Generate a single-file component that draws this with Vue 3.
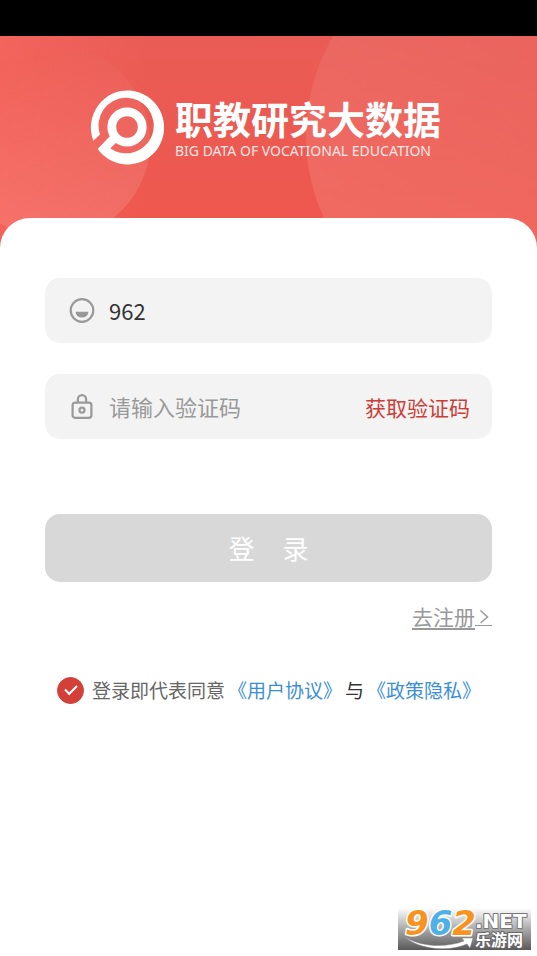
<script setup>
import { ref } from 'vue'

const account = ref('962')
const code = ref('')
const agreed = ref(true)
</script>

<template>
  <div class="page">
    <div class="status-bar"></div>

    <header class="hero">
      <svg class="hero-art" viewBox="0 0 537 213" preserveAspectRatio="xMidYMin slice" aria-hidden="true">
        <defs>
          <linearGradient id="base" x1="0" y1="0" x2="0" y2="1">
            <stop offset="0" stop-color="#e95c55" />
            <stop offset="1" stop-color="#ef574d" />
          </linearGradient>
          <linearGradient id="bubbleLeft" x1="0.3" y1="0.1" x2="0.6" y2="1">
            <stop offset="0" stop-color="#fff" stop-opacity="0" />
            <stop offset="1" stop-color="#fff" stop-opacity="0.13" />
          </linearGradient>
          <linearGradient id="bubbleRight" x1="0.6" y1="0" x2="0.2" y2="1">
            <stop offset="0" stop-color="#fff" stop-opacity="0.03" />
            <stop offset="1" stop-color="#fff" stop-opacity="0.13" />
          </linearGradient>
          <linearGradient id="glow" x1="0" y1="0" x2="1" y2="0">
            <stop offset="0" stop-color="#ff7068" stop-opacity="0.4" />
            <stop offset="1" stop-color="#ff7068" stop-opacity="0" />
          </linearGradient>
        </defs>
        <rect width="537" height="213" fill="url(#base)" />
        <rect width="150" height="213" fill="url(#glow)" />
        <circle cx="53" cy="106" r="97" fill="url(#bubbleLeft)" />
        <circle cx="502" cy="100" r="196" fill="url(#bubbleRight)" />
      </svg>
      <div class="brand">
        <svg class="brand-mark" viewBox="0 0 74 76" aria-hidden="true">
          <path d="M3.300 51.700A36.600 37 0 1 1 7.700 60L19.500 47.500L28 52L20.300 59.300A27.600 27.800 0 1 0 10 45.500Z" fill="#fff" />
          <circle cx="37" cy="38" r="15.200" fill="none" stroke="#fff" stroke-width="8.800" />
        </svg>
        <div class="brand-text">
          <h1>职教研究大数据</h1>
          <p>BIG DATA OF VOCATIONAL EDUCATION</p>
        </div>
      </div>
    </header>

    <main class="card">
      <form @submit.prevent>
        <div class="field">
          <label for="account" aria-label="账号">
            <svg viewBox="0 0 26 26" width="26" height="26" aria-hidden="true">
              <circle cx="13" cy="12.500" r="11.300" fill="none" stroke="#999" stroke-width="2.200" />
              <path d="M6.500 13.800H19.500A6.500 5.800 0 0 1 6.500 13.800Z" fill="#999" />
            </svg>
          </label>
          <input id="account" v-model="account" type="text" />
        </div>
        <div class="field">
          <label for="code" aria-label="验证码">
            <svg viewBox="0 0 26 26" width="26" height="26" aria-hidden="true">
              <g fill="none" stroke="#999" stroke-width="2.200">
                <rect x="3.600" y="8.600" width="18.800" height="15.200" rx="2.500" />
                <path d="M8.900 8.600V5.200A4.100 4.100 0 0 1 17.100 5.200V8.600" />
                <circle cx="13" cy="16.200" r="2.500" />
              </g>
            </svg>
          </label>
          <input id="code" v-model="code" type="text" placeholder="请输入验证码" />
          <button class="get-code" type="button">获取验证码</button>
        </div>

        <button class="submit" type="submit"><span>登</span><span>录</span></button>

        <a class="register" href="#register">
          <span>去注册</span>
          <svg viewBox="0 0 17 20" width="17" height="20" aria-hidden="true">
            <path d="M5.500 4.500L12.500 11L5.500 17" fill="none" stroke="#999" stroke-width="1.500" />
            <path d="M0 19.500H17" stroke="#999" stroke-width="1" />
          </svg>
        </a>

        <div class="agreement">
          <input id="agree" v-model="agreed" type="checkbox" />
          <label for="agree">登录即代表同意</label>
          <a href="#terms">《用户协议》</a>
          <span>与</span>
          <a href="#privacy">《政策隐私》</a>
        </div>
      </form>
    </main>

    <svg class="watermark" viewBox="0 0 133 42" role="img" aria-label="962.NET 乐游网">
      <defs>
        <linearGradient id="plate" x1="0" y1="0" x2="0" y2="1">
          <stop offset="0" stop-color="#fff" />
          <stop offset="0.500" stop-color="#aaa" />
          <stop offset="1" stop-color="#595959" />
        </linearGradient>
      </defs>
      <rect width="133" height="42" fill="url(#plate)" />
      <path d="M7 29C23 39 48 40 66 33L64 30L75 30L72 40L69 36C51 44 22 42 7 29Z" fill="#fff" stroke="#888" stroke-width="0.500" />
      <text class="wm-number" x="7" y="27"><tspan fill="#f7931e">9</tspan><tspan fill="#4fb0e8">6</tspan><tspan fill="#f7931e">2</tspan></text>
      <text class="wm-net" x="77" y="20">.NET</text>
      <text class="wm-name" x="77" y="38">乐游网</text>
    </svg>
  </div>
</template>

<style>
body {
  margin: 0;
  background: #fff;
}
</style>

<style scoped>
.page {
  position: relative;
  display: flex;
  flex-direction: column;
  min-height: 100vh;
  background: #fff;
  font-family: "Noto Sans CJK SC", sans-serif;
}

.status-bar {
  height: 36px;
  background: #000;
}

.hero {
  position: relative;
  overflow: hidden;
  padding: 53px 0 84px;
}

.hero-art {
  position: absolute;
  inset: 0;
  width: 100%;
  height: 100%;
}

.brand {
  position: relative;
  display: flex;
  justify-content: center;
  gap: 11px;
  padding-right: 6px;
}

.brand-mark {
  width: 74px;
  height: 76px;
}

.brand-text {
  color: #fff;
}

.brand-text h1 {
  margin: 7px 0 0;
  font-size: 38px;
  line-height: 44px;
  font-weight: 700;
}

.brand-text p {
  margin: 0;
  font-family: "Noto Sans", sans-serif;
  font-size: 14px;
  line-height: 22px;
  opacity: 0.85;
}

.card {
  position: relative;
  flex: 1;
  margin-top: -31px;
  padding: 60px 45px 0;
  border-radius: 30px 30px 0 0;
  background: #fff;
}

form {
  display: flex;
  flex-direction: column;
}

.field {
  display: flex;
  align-items: center;
  gap: 14px;
  height: 65px;
  margin-bottom: 31px;
  padding: 0 22px 0 24px;
  border-radius: 15px;
  background: #f3f3f3;
}

.field label {
  display: flex;
}

.field input {
  flex: 1;
  min-width: 0;
  padding: 0 0 2px;
  border: 0;
  outline: 0;
  background: transparent;
  color: #333;
  font-family: inherit;
  font-size: 22px;
  line-height: 32px;
}

.field input::placeholder {
  color: #999;
  opacity: 1;
}

button {
  border: 0;
  font-family: inherit;
  cursor: pointer;
}

.get-code {
  padding: 0;
  background: none;
  color: #cb3d37;
  font-size: 21px;
  line-height: 32px;
}

.submit {
  display: flex;
  align-items: center;
  justify-content: center;
  gap: 28px;
  height: 68px;
  margin-top: 44px;
  padding: 0 0 2px;
  border-radius: 15px;
  background: #d8d8d8;
  color: #fff;
  font-size: 26px;
}

.register {
  display: flex;
  align-items: center;
  align-self: flex-end;
  margin-top: 18px;
  color: #999;
  font-size: 21px;
  line-height: 32px;
  text-underline-offset: 3px;
}

.agreement {
  display: flex;
  align-items: center;
  gap: 3px;
  margin: 43px 0 0 12px;
  color: #333;
  font-size: 19px;
  line-height: 30px;
  white-space: nowrap;
}

.agreement label {
  color: #666;
}

.agreement a {
  color: #3a8ed8;
  text-decoration: none;
}

.agreement input {
  appearance: none;
  width: 27px;
  height: 27px;
  margin: 0 5px 0 0;
  border: 1px solid #d33f39;
  border-radius: 50%;
}

.agreement input:checked {
  display: grid;
  place-items: center;
  background: #d33f39;
}

.agreement input:checked::before {
  content: "";
  width: 10px;
  height: 5px;
  margin-bottom: 4px;
  border: solid #fff;
  border-width: 0 0 2px 2px;
  rotate: -45deg;
}

.watermark {
  position: absolute;
  right: 6px;
  bottom: 6px;
  width: 133px;
  height: 42px;
  overflow: visible;
}

.watermark text {
  paint-order: stroke;
  stroke-linejoin: round;
}

.wm-number {
  font: italic 700 34px "DejaVu Sans", sans-serif;
  stroke: #fff;
  stroke-width: 3px;
}

.wm-net {
  font: 700 20px "DejaVu Sans", sans-serif;
  fill: #fff;
  stroke: #777;
  stroke-width: 2px;
}

.wm-name {
  font: 700 16px "Noto Sans CJK SC", sans-serif;
  fill: #fff;
  stroke: #666;
  stroke-width: 2px;
}
</style>
